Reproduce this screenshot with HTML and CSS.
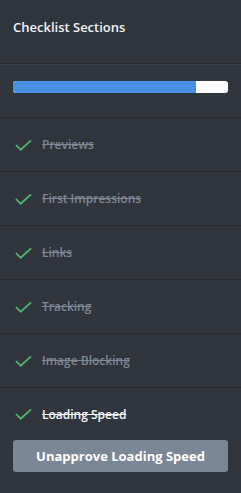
FILE: index.html
```html
<!DOCTYPE html>
<html lang="en">

<head>
    <meta charset="UTF-8">
    <title>Checklist Sections</title>
    <link rel="stylesheet" href="styles.css">
</head>

<body>
    <div class="panel">
        <div class="header">
            <h3>Checklist Sections</h3>
        </div>
        <div class="progress">
            <div class="bar">
                <div class="fill" style="width: 85%"></div>
            </div>
        </div>
        <ul class="sections">
            <li class="item">
                <svg class="check" viewBox="0 0 18 12"><polyline points="1,6 6,11 17,1" /></svg>
                <span>Previews</span>
            </li>
            <li class="item">
                <svg class="check" viewBox="0 0 18 12"><polyline points="1,6 6,11 17,1" /></svg>
                <span>First Impressions</span>
            </li>
            <li class="item">
                <svg class="check" viewBox="0 0 18 12"><polyline points="1,6 6,11 17,1" /></svg>
                <span>Links</span>
            </li>
            <li class="item">
                <svg class="check" viewBox="0 0 18 12"><polyline points="1,6 6,11 17,1" /></svg>
                <span>Tracking</span>
            </li>
            <li class="item">
                <svg class="check" viewBox="0 0 18 12"><polyline points="1,6 6,11 17,1" /></svg>
                <span>Image Blocking</span>
            </li>
            <li class="item active">
                <svg class="check" viewBox="0 0 18 12"><polyline points="1,6 6,11 17,1" /></svg>
                <span>Loading Speed</span>
            </li>
        </ul>
        <div class="actions">
            <button class="btn">Unapprove Loading Speed</button>
        </div>
    </div>
</body>

</html>
```

FILE: styles.css
```css
* {
  box-sizing: border-box;
}

body {
  margin: 0;
  background: #31353d;
  font-family: "Open Sans", "Liberation Sans", sans-serif;
  color: #fff;
}

.panel {
  width: 241px;
  height: 493px;
  background: #31353d;
}

.header {
  height: 64px;
  padding: 0 13px;
  display: flex;
  align-items: center;
  border-bottom: 1px solid #282b31;
  box-shadow: 0 1px 0 #3a3e46;
}
.header h3 {
  margin: 0 0 10px;
  font-size: 13px;
  font-weight: 600;
  color: #f2f3f5;
}

.progress {
  height: 54px;
  padding: 17px 13px 0;
  border-bottom: 1px solid #282b31;
}
.bar {
  height: 12px;
  background: #fff;
  border-radius: 3px;
  overflow: hidden;
}
.bar .fill {
  height: 100%;
  background: #4a90e2;
}

.sections {
  list-style: none;
  margin: 0;
  padding: 0;
}
.item {
  height: 54px;
  padding: 0 15px;
  display: flex;
  align-items: center;
  gap: 10px;
  border-bottom: 1px solid #282b31;
  font-size: 12px;
  font-weight: 600;
  color: #7d8795;
  text-decoration: line-through;
}
.item.active {
  color: #f4f5f7;
  border-bottom: none;
  height: 52px;
}
.check {
  width: 17px;
  height: 12px;
  flex: none;
}
.check polyline {
  fill: none;
  stroke: #52b86f;
  stroke-width: 1.8;
}

.actions {
  padding: 0 13px;
}
.btn {
  width: 100%;
  height: 32px;
  border: none;
  border-radius: 3px;
  background: #7b8796;
  color: #fff;
  font-family: inherit;
  font-size: 13px;
  font-weight: 700;
}
```
